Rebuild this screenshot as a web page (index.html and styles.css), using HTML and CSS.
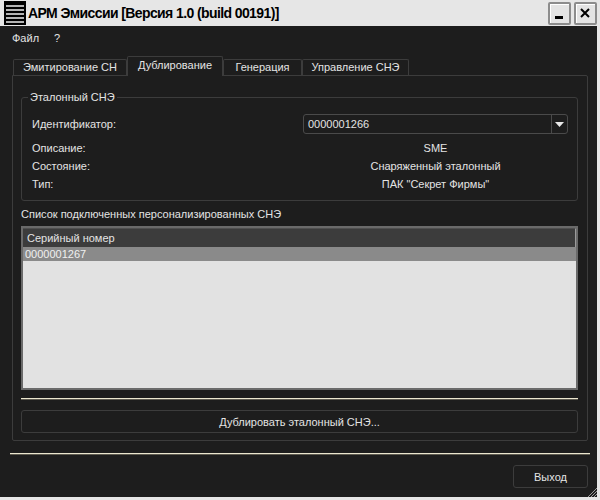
FILE: index.html
```html
<!DOCTYPE html>
<html lang="ru">
<head>
    <meta charset="UTF-8">
    <title>АРМ Эмиссии</title>
    <link rel="stylesheet" href="styles.css">
</head>
<body>
    <div class="window">
        <div class="titlebar">
            <div class="app-icon">
                <svg width="22" height="24" viewBox="0 0 22 24">
                    <rect x="2" y="4" width="18" height="2" fill="#b4b4b4"/>
                    <rect x="2" y="8" width="18" height="2" fill="#b4b4b4"/>
                    <rect x="2" y="12" width="18" height="2" fill="#b4b4b4"/>
                    <rect x="2" y="16" width="18" height="2" fill="#b4b4b4"/>
                    <rect x="2" y="20" width="18" height="2" fill="#b4b4b4"/>
                </svg>
            </div>
            <div class="title">АРМ Эмиссии [Версия 1.0 (build 00191)]</div>
            <div class="win-buttons">
                <div class="win-btn">
                    <svg width="19" height="19" viewBox="0 0 19 19"><rect x="5" y="12" width="8" height="3" fill="#000"/></svg>
                </div>
                <div class="win-btn">
                    <svg width="19" height="19" viewBox="0 0 19 19"><path d="M5 5 L13 13 M13 5 L5 13" stroke="#000" stroke-width="2"/></svg>
                </div>
            </div>
        </div>

        <div class="menubar">
            <span class="menu-item">Файл</span>
            <span class="menu-item">?</span>
        </div>

        <div class="tabs">
            <div class="tab t1">Эмитирование СН</div>
            <div class="tab t2 active">Дублирование</div>
            <div class="tab t3">Генерация</div>
            <div class="tab t4">Управление СНЭ</div>
        </div>

        <div class="tab-panel">
            <fieldset class="group">
                <legend>Эталонный СНЭ</legend>
                <div class="field-row first">
                    <div class="field-label">Идентификатор:</div>
                    <div class="combo">
                        <span class="combo-text">0000001266</span>
                        <span class="combo-arrow">
                            <svg width="9" height="5" viewBox="0 0 9 5"><path d="M0 0 H9 L4.5 5 Z" fill="#e8e8e8"/></svg>
                        </span>
                    </div>
                </div>
                <div class="field-row">
                    <div class="field-label">Описание:</div>
                    <div class="field-value">SME</div>
                </div>
                <div class="field-row">
                    <div class="field-label">Состояние:</div>
                    <div class="field-value">Снаряженный эталонный</div>
                </div>
                <div class="field-row">
                    <div class="field-label">Тип:</div>
                    <div class="field-value">ПАК "Секрет Фирмы"</div>
                </div>
            </fieldset>

            <div class="list-caption">Список подключенных персонализированных СНЭ</div>
            <div class="table">
                <div class="table-header">Серийный номер</div>
                <div class="table-row selected">0000001267</div>
            </div>

            <div class="separator"></div>
            <button class="btn wide">Дублировать эталонный СНЭ...</button>
        </div>

        <div class="separator outer"></div>
        <div class="footer">
            <button class="btn exit">Выход</button>
        </div>

        <svg class="grip" width="10" height="10" viewBox="0 0 10 10">
            <path d="M10 1 L1 10 M10 4 L4 10 M10 7 L7 10" stroke="#9a9a9a" stroke-width="1"/>
        </svg>
    </div>
</body>
</html>
```

FILE: styles.css
```css
html, body {
    margin: 0;
    padding: 0;
}
body {
    background-color: #e6e6e6;
    font-family: "Liberation Sans", Arial, sans-serif;
    font-size: 11px;
    color: #e4e4e4;
}
.window {
    position: relative;
    width: 600px;
    height: 500px;
    box-sizing: border-box;
    background-color: #1d1d1d;
    border-right: 3px solid #e6e6e6;
    border-bottom: 3px solid #e6e6e6;
    overflow: hidden;
}
.titlebar {
    display: flex;
    align-items: center;
    height: 26px;
    background-color: #e6e6e6;
    margin-right: -3px;
}
.app-icon {
    width: 22px;
    height: 24px;
    margin-left: 4px;
    background-color: #000;
}
.app-icon svg {
    display: block;
}
.title {
    margin-left: 2px;
    font-size: 14px;
    font-weight: bold;
    color: #000;
    letter-spacing: -0.6px;
}
.win-buttons {
    display: flex;
    gap: 3px;
    margin-left: auto;
    margin-right: 3px;
}
.win-btn {
    width: 19px;
    height: 19px;
    border: 2px solid #8c8c8c;
    border-radius: 2px;
    background-color: #e4e4e4;
    box-shadow: inset 1px 1px 0 #fff;
}
.win-btn svg {
    display: block;
}
.menubar {
    display: flex;
    gap: 15px;
    height: 24px;
    line-height: 24px;
    padding-left: 12px;
}
.tabs {
    display: flex;
    align-items: flex-end;
    height: 19px;
    margin: 6px 0 0 13px;
    position: relative;
    z-index: 1;
}
.tab {
    height: 16px;
    line-height: 15px;
    box-sizing: border-box;
    text-align: center;
    white-space: nowrap;
    border: 1px solid #3c3c3c;
    border-bottom: none;
    border-radius: 2px 2px 0 0;
    background-color: #1d1d1d;
}
.tab.t1 { width: 114px; }
.tab.t2 { width: 96px; }
.tab.t3 { width: 79px; }
.tab.t4 { width: 107px; }
.tab.active {
    height: 20px;
    line-height: 17px;
    margin-bottom: -1px;
}
.tab-panel {
    width: 576px;
    height: 366px;
    box-sizing: border-box;
    margin-left: 12px;
    border: 1px solid #3c3c3c;
    border-radius: 0 2px 2px 2px;
    padding: 0 9px 0 8px;
}
.group {
    margin: 14px 0 0 0;
    padding: 0 9px 0 10px;
    border: 1px solid #3c3c3c;
    border-radius: 3px;
    padding-bottom: 7px;
}
.group legend {
    padding: 0 2px;
    margin-left: -4px;
    line-height: 14px;
}
.field-row {
    display: grid;
    grid-template-columns: 271px 1fr;
    align-items: center;
    height: 18px;
}
.field-row.first {
    height: 20px;
    margin: 10px 0 5px;
}
.field-value {
    text-align: center;
}
.combo {
    display: flex;
    height: 20px;
    box-sizing: border-box;
    border: 1px solid #4a4a4a;
    border-radius: 3px;
    align-items: stretch;
}
.combo-text {
    flex: 1;
    line-height: 18px;
    padding-left: 4px;
}
.combo-arrow {
    width: 15px;
    border-left: 1px solid #4a4a4a;
    display: flex;
    align-items: center;
    justify-content: center;
}
.combo-arrow svg {
    display: block;
}
.list-caption {
    margin-top: 6px;
    line-height: 14px;
}
.table {
    height: 164px;
    box-sizing: border-box;
    margin-top: 5px;
    border: 2px solid #6a6a6a;
    background-color: #e2e2e2;
}
.table-header {
    height: 19px;
    line-height: 19px;
    padding-left: 4px;
    background-color: #3c3c3c;
    border-right: 1px solid #9a9a9a;
    border-top: 1px solid #505050;
    box-sizing: border-box;
}
.table-row {
    height: 14px;
    line-height: 14px;
    padding-left: 2px;
}
.table-row.selected {
    background-color: #8a8a8a;
    color: #f0f0f0;
}
.separator {
    height: 2px;
    margin-top: 8px;
    background-color: #ebe6cf;
    border-bottom: 1px solid #5e5b50;
    box-sizing: border-box;
}
.separator.outer {
    margin: 12px 7px 0 10px;
}
.btn {
    display: block;
    height: 23px;
    box-sizing: border-box;
    border: 1px solid #3c3c3c;
    border-radius: 3px;
    background-color: #1d1d1d;
    color: #e4e4e4;
    font-family: "Liberation Sans", Arial, sans-serif;
    font-size: 11px;
    padding: 0;
}
.btn.wide {
    width: 100%;
    margin-top: 10px;
}
.footer {
    display: flex;
    justify-content: flex-end;
    padding: 10px 9px 0 0;
}
.btn.exit {
    width: 75px;
}
.grip {
    position: absolute;
    right: 0;
    bottom: 0;
}
```
